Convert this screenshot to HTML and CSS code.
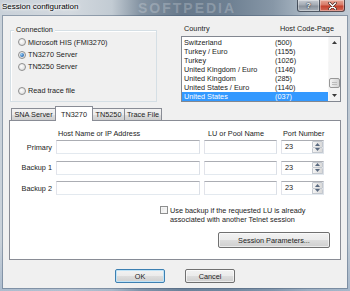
FILE: index.html
```html
<!DOCTYPE html>
<html>
<head>
<meta charset="utf-8">
<title>Session configuration</title>
<link rel="stylesheet" href="styles.css">
</head>
<body>
<div class="win">
  <div class="titlebar">
    <span class="title">Session configuration</span>
    <span class="wm">SOFTPEDIA</span>
    <div class="capbtns">
      <span class="cap help">?</span>
      <span class="cap close">
        <svg width="9" height="8" viewBox="0 0 9 8"><path d="M1.5 1 L7.5 7 M7.5 1 L1.5 7" stroke="#3a1a14" stroke-width="2.6" stroke-linecap="round"/><path d="M1.5 1 L7.5 7 M7.5 1 L1.5 7" stroke="#fff" stroke-width="1.5" stroke-linecap="round"/></svg>
      </span>
    </div>
  </div>
  <div class="client">
    <div class="top">
      <div class="group">
        <span class="legend">Connection</span>
        <div class="opt first"><span class="radio"></span>Microsoft HIS (FMI3270)</div>
        <div class="opt"><span class="radio on"></span>TN3270 Server</div>
        <div class="opt"><span class="radio"></span>TN5250 Server</div>
        <div class="opt gap"><span class="radio"></span>Read trace file</div>
      </div>
      <div class="country">
        <div class="lhead"><span class="lh1">Country</span><span>Host Code-Page</span></div>
        <div class="listbox">
          <div class="rows">
            <div class="row"><span class="nm">Switzerland</span><span>(500)</span></div>
            <div class="row"><span class="nm">Turkey / Euro</span><span>(1155)</span></div>
            <div class="row"><span class="nm">Turkey</span><span>(1026)</span></div>
            <div class="row"><span class="nm">United Kingdom / Euro</span><span>(1146)</span></div>
            <div class="row"><span class="nm">United Kingdom</span><span>(285)</span></div>
            <div class="row"><span class="nm">United States / Euro</span><span>(1140)</span></div>
            <div class="row sel"><span class="nm">United States</span><span>(037)</span></div>
          </div>
          <div class="vscroll">
            <div class="sbtn"><svg width="5" height="3" viewBox="0 0 5 3"><path d="M0 3 L2.5 0 L5 3 Z" fill="#3b3b3b"/></svg></div>
            <div class="track"><div class="thumb"><span class="grip"></span></div></div>
            <div class="sbtn"><svg width="5" height="3" viewBox="0 0 5 3"><path d="M0 0 L5 0 L2.5 3 Z" fill="#3b3b3b"/></svg></div>
          </div>
        </div>
      </div>
    </div>

    <div class="tabs">
      <span class="tab t1">SNA Server</span>
      <span class="tab t2 sel">TN3270</span>
      <span class="tab t3">TN5250</span>
      <span class="tab t4">Trace File</span>
    </div>
    <div class="panel">
      <div class="cols head">
        <span></span>
        <span class="h hhost">Host Name or IP Address</span>
        <span class="h hlu">LU or Pool Name</span>
        <span class="h hport">Port Number</span>
      </div>
      <div class="cols fields">
        <span class="lbl">Primary</span>
        <span class="input"></span>
        <span class="input"></span>
        <span class="input port"><span class="val">23</span><span class="spinner"><span class="sb"><svg width="5" height="3" viewBox="0 0 5 3"><path d="M0 3 L2.5 0 L5 3 Z" fill="#5a6a80"/></svg></span><span class="sb"><svg width="5" height="3" viewBox="0 0 5 3"><path d="M0 0 L5 0 L2.5 3 Z" fill="#5a6a80"/></svg></span></span></span>

        <span class="lbl">Backup 1</span>
        <span class="input"></span>
        <span class="input"></span>
        <span class="input port"><span class="val">23</span><span class="spinner"><span class="sb"><svg width="5" height="3" viewBox="0 0 5 3"><path d="M0 3 L2.5 0 L5 3 Z" fill="#5a6a80"/></svg></span><span class="sb"><svg width="5" height="3" viewBox="0 0 5 3"><path d="M0 0 L5 0 L2.5 3 Z" fill="#5a6a80"/></svg></span></span></span>

        <span class="lbl">Backup 2</span>
        <span class="input"></span>
        <span class="input"></span>
        <span class="input port"><span class="val">23</span><span class="spinner"><span class="sb"><svg width="5" height="3" viewBox="0 0 5 3"><path d="M0 3 L2.5 0 L5 3 Z" fill="#5a6a80"/></svg></span><span class="sb"><svg width="5" height="3" viewBox="0 0 5 3"><path d="M0 0 L5 0 L2.5 3 Z" fill="#5a6a80"/></svg></span></span></span>
      </div>
      <div class="chkrow">
        <span class="checkbox"></span>
        <span class="chktext">Use backup if the requested LU is already<br>associated with another Telnet session</span>
      </div>
      <div class="sprow"><span class="btn spbtn">Session Parameters...</span></div>
    </div>

    <div class="dlgbtns">
      <span class="btn def">OK</span>
      <span class="btn">Cancel</span>
    </div>
  </div>
</div>
</body>
</html>
```

FILE: styles.css
```css
* { box-sizing: border-box; }
html, body { margin: 0; padding: 0; }
body {
  width: 350px;
  height: 291px;
  overflow: hidden;
  font-family: "Liberation Sans", Arial, sans-serif;
  font-size: 7.3px;
  color: #1c1c1c;
}
.win {
  width: 350px;
  height: 291px;
  display: flex;
  flex-direction: column;
  background:
    linear-gradient(180deg, rgba(255,255,255,0) 0, rgba(255,255,255,0) 240px, rgba(120,150,185,0.35) 291px),
    linear-gradient(90deg, #c9d1d9 0, #d3d9df 20%, #c2cbd3 32%, #8594a3 40%, #66788a 52%, #6f8193 66%, #8797a7 78%, #aebbc7 88%, #c0cad4 100%);
}

/* title bar */
.titlebar {
  height: 16px;
  flex: none;
  display: flex;
  align-items: flex-start;
  position: relative;
}
.title {
  padding-left: 2px;
  font-size: 8px;
  line-height: 13px;
  color: #000;
  text-shadow: 0 0 3px #fff, 0 0 3px #fff, 0 0 5px #fff;
}
.wm {
  position: absolute;
  left: 138px;
  top: 0;
  font-size: 14px;
  line-height: 16px;
  font-weight: bold;
  letter-spacing: 2px;
  color: rgba(255,255,255,0.22);
}
.capbtns {
  margin-left: auto;
  margin-right: 5px;
  display: flex;
}
.cap {
  height: 12px;
  display: flex;
  align-items: center;
  justify-content: center;
  border: 1px solid rgba(30,40,55,0.7);
  border-top: none;
  box-shadow: inset 0 0 0 1px rgba(255,255,255,0.35);
}
.help {
  width: 23px;
  border-radius: 0 0 0 3px;
  background: linear-gradient(180deg, #c7ccd3 0, #a4abb4 45%, #8a929c 55%, #a9b1ba 100%);
  color: #fff;
  font-weight: bold;
  font-size: 8px;
  text-shadow: 0 0 2px #1a2330, 0 0 1px #1a2330;
}
.close {
  width: 25px;
  border-left: none;
  border-radius: 0 0 3px 0;
  background: linear-gradient(180deg, #e7a797 0, #d77867 45%, #c4402c 55%, #d26b5a 100%);
}

/* client */
.client {
  flex: 1;
  margin: 0 3px 3px 3px;
  background: #f0f0f0;
  box-shadow: 0 0 0 1px rgba(70,90,115,0.45);
  display: flex;
  flex-direction: column;
}
.top {
  display: flex;
  align-items: flex-start;
  padding-left: 7px;
  height: 86px;
}
.group {
  margin-top: 14px;
  width: 147px;
  height: 72px;
  border: 1px solid #d5dfe5;
  box-shadow: inset 1px 1px 0 #fff;
}
.legend {
  display: block;
  width: max-content;
  margin: -6px 0 0 3px;
  padding: 0 2px;
  line-height: 9px;
  background: #f0f0f0;
}
.opt {
  display: flex;
  align-items: center;
  height: 12.25px;
  padding-left: 7px;
}
.opt.first { margin-top: 2.35px; }
.opt.gap { margin-top: 11.75px; }
.radio {
  width: 8px;
  height: 8px;
  border-radius: 50%;
  border: 1px solid #8e8f8f;
  background: radial-gradient(circle at 40% 40%, #fdfdfd 0, #e6e6e6 60%, #cfcfcf 100%);
  margin-right: 2px;
  display: flex;
  align-items: center;
  justify-content: center;
  flex: none;
}
.radio.on::after {
  content: "";
  width: 4px;
  height: 4px;
  border-radius: 50%;
  background: radial-gradient(circle at 35% 35%, #9cd0f5 0, #3d7fc4 55%, #1d4f8c 100%);
}

.country {
  margin-left: 24px;
  margin-top: 8px;
}
.lhead {
  display: flex;
  height: 12px;
  line-height: 10px;
  padding-left: 3px;
}
.lh1 { width: 96px; }
.listbox {
  width: 160px;
  height: 66px;
  border: 1px solid #828790;
  background: #fff;
  display: flex;
}
.rows {
  width: 146px;
  padding-top: 1px;
}
.row {
  display: flex;
  height: 9px;
  line-height: 9px;
  white-space: nowrap;
}
.row .nm {
  width: 93px;
  padding-left: 2px;
}
.row.sel {
  background: #3399ff;
  color: #fff;
}
.vscroll {
  width: 12px;
  display: flex;
  flex-direction: column;
  background: #f3f3f3;
  border-left: 1px solid #f7f7f7;
}
.sbtn {
  height: 11px;
  display: flex;
  align-items: center;
  justify-content: center;
  flex: none;
}
.track { flex: 1; }
.thumb {
  margin-top: 30px;
  width: 11px;
  height: 10px;
  border: 1px solid #979797;
  border-radius: 2px;
  background: linear-gradient(90deg, #f3f3f3 0, #e2e2e2 50%, #d6d6d6 100%);
  display: flex;
  align-items: center;
  justify-content: center;
}
.grip {
  width: 5px;
  height: 3px;
  border-top: 1px solid #bcbcbc;
  border-bottom: 1px solid #bcbcbc;
}

/* tabs */
.tabs {
  margin-top: 4px;
  margin-bottom: -1px;
  height: 15px;
  display: flex;
  align-items: flex-end;
  padding-left: 8px;
}
.tab {
  height: 13px;
  border: 1px solid #898c95;
  background: linear-gradient(180deg, #f2f2f2 0, #ebebeb 50%, #dddddd 51%, #cfcfcf 100%);
  display: flex;
  justify-content: center;
  padding-top: 1px;
  line-height: 10px;
  white-space: nowrap;
}
.tab + .tab { margin-left: -1px; }
.t1 { width: 45px; }
.t2 { width: 38px; }
.t3 { width: 33px; }
.t4 { width: 38px; }
.tab.sel {
  height: 15px;
  background: #fff;
  border-bottom: none;
  padding-top: 3px;
  position: relative;
  z-index: 1;
}

/* panel */
.panel {
  margin-left: 6px;
  width: 332px;
  height: 140px;
  flex: none;
  border: 1px solid #898c95;
  background: #fff;
  padding-top: 8px;
}
.cols {
  display: grid;
  grid-template-columns: 42px 144px 73px 43px;
  column-gap: 4px;
}
.head {
  height: 10px;
  line-height: 10px;
  margin-bottom: 1px;
}
.h { white-space: nowrap; }
.hhost { padding-left: 2px; }
.hlu { padding-left: 4px; }
.hport { padding-left: 2px; }
.fields {
  grid-template-rows: 14px 14px 14px;
  row-gap: 6.5px;
}
.lbl {
  text-align: right;
  align-self: center;
  white-space: nowrap;
}
.input {
  height: 14px;
  border: 1px solid #d3d9df;
  border-top-color: #abadb3;
  border-left-color: #e2e3ea;
  border-right-color: #dbdfe6;
  border-bottom-color: #e3e9ef;
  background: #fff;
  display: flex;
}
.port .val {
  flex: 1;
  padding-left: 3px;
  line-height: 12px;
}
.spinner {
  width: 11px;
  display: flex;
  flex-direction: column;
}
.sb {
  flex: 1;
  display: flex;
  align-items: center;
  justify-content: center;
  border: 1px solid #c3c8cf;
  border-radius: 1px;
  background: linear-gradient(90deg, #f4f4f4 0, #e4e4e4 60%, #d9d9d9 100%);
}
.sb + .sb { border-top: none; }

.chkrow {
  display: flex;
  align-items: flex-start;
  margin-top: 10.5px;
  padding-left: 150px;
}
.checkbox {
  width: 8px;
  height: 8px;
  flex: none;
  margin-top: 0.5px;
  border: 1px solid #8e8f8f;
  background: linear-gradient(135deg, #e0e0e0 0, #f4f4f4 60%, #fdfdfd 100%);
  box-shadow: inset 0 0 0 1px #f4f4f4;
}
.chktext {
  margin-left: 2px;
  line-height: 9.5px;
  white-space: nowrap;
}
.sprow {
  display: flex;
  justify-content: flex-end;
  padding-right: 10px;
  margin-top: 7.5px;
}
.btn {
  display: flex;
  align-items: center;
  justify-content: center;
  border: 1px solid #707070;
  border-radius: 2px;
  background: linear-gradient(180deg, #f2f2f2 0, #ebebeb 50%, #dddddd 51%, #cfcfcf 100%);
  box-shadow: inset 0 0 0 1px rgba(255,255,255,0.6);
  white-space: nowrap;
}
.spbtn {
  width: 112px;
  height: 16px;
}
.dlgbtns {
  margin-top: 9px;
  display: flex;
  justify-content: center;
  gap: 20px;
}
.dlgbtns .btn {
  width: 50px;
  height: 14px;
}
.btn.def {
  border-color: #3c7fb1;
  box-shadow: inset 0 0 0 1px #bfe3f7;
}
```
